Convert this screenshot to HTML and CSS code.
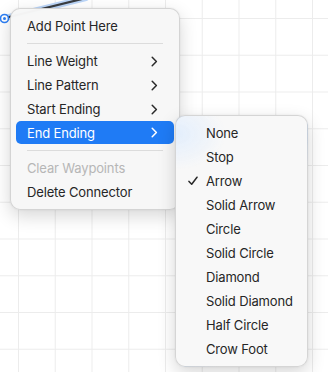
FILE: index.html
```html
<!DOCTYPE html>
<html>
<head>
<meta charset="utf-8">
<link rel="stylesheet" href="styles.css">
</head>
<body>
<div class="canvas">
  <svg class="connector" width="90" height="30" viewBox="0 0 90 30">
    <path d="M5 18 L86 -2" stroke="#bcd6f8" stroke-width="6" stroke-linecap="round" fill="none"/>
    <path d="M5 18 L86 -2" stroke="#3a3d42" stroke-width="2.2" fill="none"/>
    <circle cx="4.5" cy="18.5" r="4" fill="#fff" stroke="#2d7ff4" stroke-width="1.6"/>
    <circle cx="4.5" cy="18.5" r="1.5" fill="#2d7ff4"/>
  </svg>

  <div class="menu main-menu">
    <div class="item">Add Point Here</div>
    <div class="sep"></div>
    <div class="item">Line Weight<svg class="chev" width="7" height="11" viewBox="0 0 7 11"><path d="M1.2 1.2 L5.4 5.5 L1.2 9.8" fill="none" stroke="#2a2a2a" stroke-width="1.5" stroke-linecap="round" stroke-linejoin="round"/></svg></div>
    <div class="item">Line Pattern<svg class="chev" width="7" height="11" viewBox="0 0 7 11"><path d="M1.2 1.2 L5.4 5.5 L1.2 9.8" fill="none" stroke="#2a2a2a" stroke-width="1.5" stroke-linecap="round" stroke-linejoin="round"/></svg></div>
    <div class="item">Start Ending<svg class="chev" width="7" height="11" viewBox="0 0 7 11"><path d="M1.2 1.2 L5.4 5.5 L1.2 9.8" fill="none" stroke="#2a2a2a" stroke-width="1.5" stroke-linecap="round" stroke-linejoin="round"/></svg></div>
    <div class="item active">End Ending<svg class="chev" width="7" height="11" viewBox="0 0 7 11"><path d="M1.2 1.2 L5.4 5.5 L1.2 9.8" fill="none" stroke="#ffffff" stroke-width="1.5" stroke-linecap="round" stroke-linejoin="round"/></svg></div>
    <div class="sep"></div>
    <div class="item disabled">Clear Waypoints</div>
    <div class="item">Delete Connector</div>
  </div>

  <div class="menu sub-menu">
    <div class="item"><span class="check"></span>None</div>
    <div class="item"><span class="check"></span>Stop</div>
    <div class="item"><span class="check"><svg width="10" height="10" viewBox="0 0 10 10"><path d="M1 5.4 L3.7 8.3 L9 1.2" fill="none" stroke="#2a2a2a" stroke-width="1.5" stroke-linecap="round" stroke-linejoin="round"/></svg></span>Arrow</div>
    <div class="item"><span class="check"></span>Solid Arrow</div>
    <div class="item"><span class="check"></span>Circle</div>
    <div class="item"><span class="check"></span>Solid Circle</div>
    <div class="item"><span class="check"></span>Diamond</div>
    <div class="item"><span class="check"></span>Solid Diamond</div>
    <div class="item"><span class="check"></span>Half Circle</div>
    <div class="item"><span class="check"></span>Crow Foot</div>
  </div>
</div>
</body>
</html>
```
FILE: styles.css
```css
html, body {
  margin: 0;
  padding: 0;
}
body {
  width: 328px;
  height: 372px;
  overflow: hidden;
  background-color: #ffffff;
  background-image:
    linear-gradient(to right, #ececec 1px, transparent 1px),
    linear-gradient(to bottom, #ececec 1px, transparent 1px);
  background-size: 36.75px 36.75px;
  background-position: 18px 18px;
  font-family: Inter, "Liberation Sans", sans-serif;
  font-size: 13px;
  color: #262626;
}
.canvas {
  position: relative;
  width: 328px;
  height: 372px;
}
.connector {
  position: absolute;
  left: 0;
  top: 0;
}
.menu {
  position: absolute;
  box-sizing: border-box;
  display: flex;
  flex-direction: column;
  padding: 5px;
  background: rgba(247, 247, 247, 0.98);
  border: 0.5px solid rgba(0, 0, 0, 0.14);
  border-radius: 10px;
  box-shadow: 0 6px 18px rgba(0, 0, 0, 0.16), 0 0 2px rgba(0, 0, 0, 0.08);
}
.main-menu {
  left: 10px;
  top: 8px;
  width: 170px;
}
.sub-menu {
  left: 175px;
  top: 115px;
  width: 133px;
  background:
    radial-gradient(ellipse 50px 36px at 0px 18px, rgba(218, 234, 255, 0.7), rgba(218, 234, 255, 0)),
    rgba(248, 248, 248, 0.99);
}
.item {
  height: 24px;
  display: flex;
  align-items: center;
  justify-content: space-between;
  padding: 0 16px 0 11px;
  border-radius: 5px;
  white-space: nowrap;
  letter-spacing: -0.15px;
}
.item.active {
  background: #1f7bf5;
  color: #ffffff;
  height: 23px;
  margin-bottom: 1px;
}
.item.disabled {
  color: #b6b6b6;
}
.sep {
  height: 1px;
  margin: 5px 11px;
  background: #dcdcdc;
}
.sub-menu .item {
  justify-content: flex-start;
  padding: 0 0 0 7px;
}
.check {
  width: 18px;
  flex-shrink: 0;
  display: flex;
  align-items: center;
}
```
